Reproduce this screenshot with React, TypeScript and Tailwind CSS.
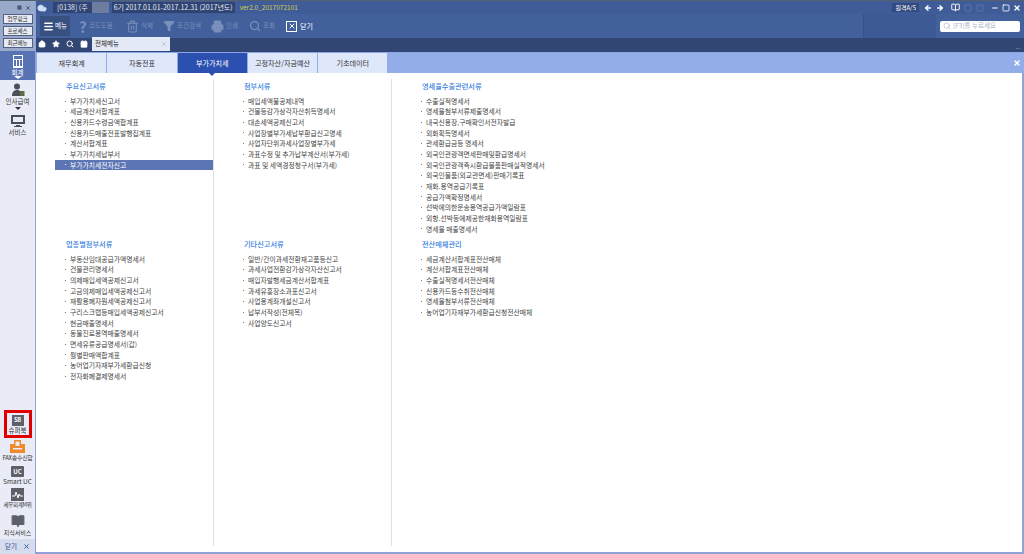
import { ArrowLeft, ArrowRight, BookOpen, Calendar, Cloud, Filter, Home, Menu, Minus, Printer, Search, Square, Star, Trash2, X } from "lucide-react";

const font = "font-['Noto_Sans_CJK_KR','Liberation_Sans',sans-serif]";

const toolbarItems = [
	{ label: "코드도움", icon: <span className="text-[15px] font-bold leading-none">?</span>, width: "w-[47px]" },
	{ label: "삭제", icon: <Trash2 size={13} strokeWidth={2} />, width: "w-[37px]" },
	{ label: "조건검색", icon: <Filter size={12} fill="currentColor" />, width: "w-[48px]" },
	{ label: "인쇄", icon: <Printer size={13} fill="currentColor" />, width: "w-[38px]" },
	{ label: "조회", icon: <Search size={12} strokeWidth={2.5} />, width: "w-[37px]" },
];

const tabs = ["재무회계", "자동전표", "부가가치세", "고정자산/자금예산", "기초데이터"];

const sections = [
	[
		{ title: "주요신고서류", items: ["부가가치세신고서", "세금계산서합계표", "신용카드수령금액합계표", "신용카드매출전표발행집계표", "계산서합계표", "부가가치세납부서", "부가가치세전자신고"] },
		{ title: "업종별첨부서류", items: ["부동산임대공급가액명세서", "건물관리명세서", "의제매입세액공제신고서", "고금의제매입세액공제신고서", "재활용폐자원세액공제신고서", "구리스크랩등매입세액공제신고서", "현금매출명세서", "동물진료용역매출명세서", "면세유류공급명세서(갑)", "월별판매액합계표", "농어업기자재부가세환급신청", "전자화폐결제명세서"] },
	],
	[
		{ title: "첨부서류", items: ["매입세액불공제내역", "건물등감가상각자산취득명세서", "대손세액공제신고서", "사업장별부가세납부환급신고명세", "사업자단위과세사업장별부가세", "과표수정 및 추가납부계산서(부가세)", "과표 및 세액경정청구서(부가세)"] },
		{ title: "기타신고서류", items: ["일반/간이과세전환재고품등신고", "과세사업전환감가상각자산신고서", "매입자발행세금계산서합계표", "과세유흥장소과표신고서", "사업용계좌개설신고서", "납부서작성(전체목)", "사업양도신고서"] },
	],
	[
		{ title: "영세율수출관련서류", items: ["수출실적명세서", "영세율첨부서류제출명세서", "내국신용장,구매확인서전자발급", "외화획득명세서", "관세환급금등 명세서", "외국인관광객면세판매및환급명세서", "외국인관광객즉시환급물품판매실적명세서", "외국인물품(외교관면세)판매기록표", "재화.용역공급기록표", "공급가액확정명세서", "선박에의한운송용역공급가액일람표", "외항.선박등에제공한재화용역일람표", "영세율 매출명세서"] },
		{ title: "전산매체관리", items: ["세금계산서합계표전산매체", "계산서합계표전산매체", "수출실적명세서전산매체", "신용카드등수취전산매체", "영세율첨부서류전산매체", "농어업기자재부가세환급신청전산매체"] },
	],
];

function Sidebar() {
	return (
		<aside className="w-[36px] shrink-0 flex flex-col bg-[#e9ecf7] border-r border-[#8fa3d8]">
			<div className="h-[50px] shrink-0 bg-[#98a9c9] flex flex-col items-center">
				<div className="h-[13px] w-full flex items-center justify-end gap-[3px] pr-[4px] text-[#4c5c80]">
					<Square size={5} fill="currentColor" />
					<X size={6} strokeWidth={4} />
				</div>
				{["업무링크", "프로세스", "최근메뉴"].map((label) => (
					<div key={label} className="w-[30px] h-[10px] mb-[2px] bg-[#e8ebf4] border border-[#4f5f85] text-[5.5px] leading-[8px] text-center text-[#222]">
						{label}
					</div>
				))}
			</div>
			<div className="h-[29px] shrink-0 bg-[#5773b4] flex flex-col items-center pt-[4px] text-white">
				<div className="w-[10px] h-[13px] shrink-0 bg-white p-[1px]">
					<div className="h-[3px] bg-[#5773b4]" />
					<div className="mt-[1px] h-[6px] bg-[repeating-linear-gradient(90deg,#5773b4_0,#5773b4_2px,#fff_2px,#fff_3px)]" />
				</div>
				<span className="text-[6.5px] leading-[8px]">회계</span>
				<span className="w-0 h-0 border-x-[4px] border-x-transparent border-t-[3px] border-t-white" />
			</div>
			<div className="flex flex-col items-center pt-[3px] text-[#333]">
				<svg width="14" height="14" viewBox="0 0 14 14" fill="#4a4f57">
					<circle cx="6" cy="3.5" r="3" />
					<path d="M1 13c0-4 2-6 5-6s3 1 3 2v4z" />
					<rect x="9" y="8" width="4.5" height="5" fill="#5c6a45" />
				</svg>
				<span className="text-[6.5px] leading-[9px]">인사급여</span>
				<span className="w-0 h-0 mt-[1px] border-x-[3px] border-x-transparent border-t-[3px] border-t-[#333]" />
				<svg className="mt-[4px]" width="14" height="14" viewBox="0 0 14 14" fill="#4a4f57">
					<path d="M0 1h14v9H0zM2 3v5h10V3zM5 11h4v1h2v1H3v-1h2z" fillRule="evenodd" />
				</svg>
				<span className="text-[6.5px] leading-[9px]">서비스</span>
			</div>
			<div className="mt-auto flex flex-col items-center text-[#333]">
				<div className="w-[28px] h-[28px] border-[3px] border-[#e00000] flex flex-col items-center justify-center">
					<div className="w-[12px] h-[11px] bg-[#5d6069] text-white text-[5.5px] font-bold leading-[11px] text-center">SB</div>
					<span className="text-[6.5px] leading-[8px] whitespace-nowrap">슈퍼북</span>
				</div>
				<svg className="mt-[2px]" width="15" height="13" viewBox="0 0 15 13" fill="#ef8a2c">
					<path d="M4 0h7v4h4v9H0V4h4zM5.5 1.5V6h4V1.5zM3 8v1.5h9V8z" fillRule="evenodd" />
				</svg>
				<span className="text-[6px] leading-[9px] whitespace-nowrap tracking-[-0.3px]">FAX송수신함</span>
				<div className="mt-[4px] w-[13px] h-[11px] bg-[#5d6069] rounded-[1px] text-white text-[6px] font-bold leading-[11px] text-center">UC</div>
				<span className="text-[6.5px] leading-[9px] whitespace-nowrap">Smart UC</span>
				<svg className="mt-[2px]" width="13" height="13" viewBox="0 0 13 13">
					<rect width="13" height="13" fill="#5d6069" />
					<path d="M1 8h3l1-4 2 6 1-4 1 2h3" stroke="#fff" fill="none" />
				</svg>
				<span className="text-[5.5px] leading-[9px] whitespace-nowrap tracking-[-0.3px]">세무회계M위</span>
				<BookOpen className="mt-[4px]" size={14} fill="#5d6069" color="#5d6069" />
				<span className="text-[6px] leading-[9px] whitespace-nowrap">지식서비스</span>
				<div className="mt-[2px] w-full h-[15px] bg-[#d5dcee] flex items-center justify-center gap-[6px] text-[#2f4a88]">
					<span className="text-[6.5px]">닫기</span>
					<X size={7} strokeWidth={3} />
				</div>
			</div>
		</aside>
	);
}

function Section({ title, items, height }: { title: string; items: string[]; height: string }) {
	return (
		<div className={`${height} shrink-0 flex flex-col`}>
			<h3 className="shrink-0 pl-[30px] text-[7.2px] leading-[10px] font-medium text-[#3a7fe0] h-[22.7px] pt-[8px]">{title}</h3>
			<ul className="shrink-0">
				{items.map((item) => {
					const selected = item === "부가가치세전자신고";
					return (
						<li
							key={item}
							className={`ml-[19px] mr-[1px] pl-[10px] h-[10.67px] leading-[10.67px] text-[6.8px] whitespace-nowrap flex items-center gap-[4px] ${selected ? "bg-[#5b75b5] text-white" : "text-[#444]"}`}
						>
							<span className={`w-[1px] h-[1px] shrink-0 ${selected ? "bg-white" : "bg-[#777]"}`} />
							{item}
						</li>
					);
				})}
			</ul>
		</div>
	);
}

export default function App() {
	return (
		<div className={`${font} w-[1024px] h-[554px] overflow-hidden flex flex-col bg-[#3f5b98] border-t border-[#55606f]`}>
			<div className="flex-1 flex min-h-0">
				<Sidebar />
				<div className="flex-1 min-w-0 flex flex-col">
					{/* Title bar */}
					<div className="h-[13px] shrink-0 flex items-center text-[#e6ebf7] text-[7px]">
						<Cloud size={10} className="ml-[1px] text-[#cfe0f2]" fill="currentColor" />
						<div className="ml-[6px] h-[11px] px-[4px] bg-[#2f4472] whitespace-nowrap leading-[11px]">[0138] (주</div>
						<div className="w-[17px] h-[11px] bg-[#6d7c9f]" />
						<div className="ml-[3px] h-[11px] px-[2px] bg-[#2f4472] whitespace-nowrap leading-[11px]">6기 2017.01.01-2017.12.31 (2017년도)</div>
						<span className="ml-[5px] text-[#d2cf4e] text-[6.5px] whitespace-nowrap">ver2.0_2017072101</span>
						<div className="ml-auto flex items-center text-white">
							<span className="px-[3px] h-[9px] leading-[9px] bg-[#324a7d] text-[6px] whitespace-nowrap">원격A/S</span>
							<ArrowLeft className="ml-[5px]" size={8} strokeWidth={4} />
							<ArrowRight className="ml-[4px]" size={8} strokeWidth={4} />
							<BookOpen className="ml-[7px]" size={9} strokeWidth={2.5} />
							<Square className="ml-[4px] text-[#6a80b3]" size={8} />
							<Square className="ml-[4px] text-[#6a80b3]" size={8} />
							<Minus className="ml-[7px]" size={8} strokeWidth={3} />
							<Square className="ml-[3px]" size={8} strokeWidth={2.5} />
							<X className="ml-[3px] mr-[3px]" size={8} strokeWidth={4} />
						</div>
					</div>

					{/* Toolbar */}
					<div className="h-[24px] shrink-0 flex items-center bg-[#42609c] text-[#7b8fbb] text-[6.5px]">
						<div className="ml-[4px] w-[30px] h-[20px] bg-[#37507f] flex items-center justify-center gap-[1px] text-white whitespace-nowrap">
							<Menu size={11} strokeWidth={3} />
							메뉴
						</div>
						<div className="ml-[9px] flex items-center">
							{toolbarItems.map((item) => (
								<div key={item.label} className={`${item.width} flex items-center gap-[2px] whitespace-nowrap`}>
									{item.icon}
									{item.label}
								</div>
							))}
						</div>
						<div className="flex items-center gap-[3px] text-white text-[7px] whitespace-nowrap">
							<span className="w-[11px] h-[11px] border border-white flex items-center justify-center">
								<X size={8} strokeWidth={3} />
							</span>
							닫기
						</div>
						<div className="ml-auto w-[73px] h-[24px] bg-[#3d5a96] border-l border-[#37507f]" />
						<div className="mx-[4px] w-[80px] h-[11px] bg-white rounded-[2px] flex items-center gap-[2px] pl-[3px] text-[#aab4c8] text-[6.5px] whitespace-nowrap">
							<Search size={8} />
							[F3]를 누르세요
						</div>
					</div>

					{/* Open window tabs */}
					<div className="h-[14px] shrink-0 flex items-end bg-[#314673] border-b border-[#314673]">
						<div className="flex h-[14px] items-center gap-[6px] pl-[2px] pr-[4px] text-white">
							<Home size={8} fill="currentColor" />
							<Star size={8} fill="currentColor" />
							<Search size={8} strokeWidth={3} />
							<Calendar size={8} fill="currentColor" />
						</div>
						<div className="w-[78px] h-[14px] bg-[#e4e9f7] flex items-center justify-between px-[3px] text-[#222] text-[6.5px]">
							전체메뉴
							<X size={6} className="text-[#98a2b8]" />
						</div>
						<span className="ml-auto mr-[3px] text-[#8c9bbb] text-[7px] leading-[10px]">...</span>
					</div>

					{/* Category tabs */}
					<div className="h-[21px] shrink-0 flex items-stretch bg-[#93ade9] border-t border-[#8aa6e6] pl-[1px]">
						{tabs.map((tab) => (
							<div
								key={tab}
								className={`relative w-[70.3px] flex items-center justify-center text-[7.1px] whitespace-nowrap border-r border-[#93ade9] ${tab === "부가가치세" ? "bg-[#2b50b0] text-white" : "bg-[#dfe7fb] text-[#333]"}`}
							>
								{tab}
								{tab === "부가가치세" && (
									<span className="absolute top-full left-1/2 -translate-x-1/2 w-0 h-0 border-x-[3px] border-x-transparent border-t-[3px] border-t-[#2b50b0]" />
								)}
							</div>
						))}
						<X className="ml-auto mr-[3px] self-center text-white" size={8} strokeWidth={4} />
					</div>

					{/* Menu body */}
					<div className="flex-1 min-h-0 bg-white border-r-2 border-b-2 border-[#8fa3d8] grid grid-cols-[178px_178px_1fr]">
						{sections.map((column, index) => (
							<div key={column[0].title} className="relative flex flex-col">
								<Section title={column[0].title} items={column[0].items} height="h-[158px]" />
								<Section title={column[1].title} items={column[1].items} height="h-[300px]" />
								{index < 2 && <span className="absolute top-[6px] bottom-[6px] right-0 w-px bg-[#dde0e6]" />}
							</div>
						))}
					</div>
				</div>
			</div>
		</div>
	);
}
